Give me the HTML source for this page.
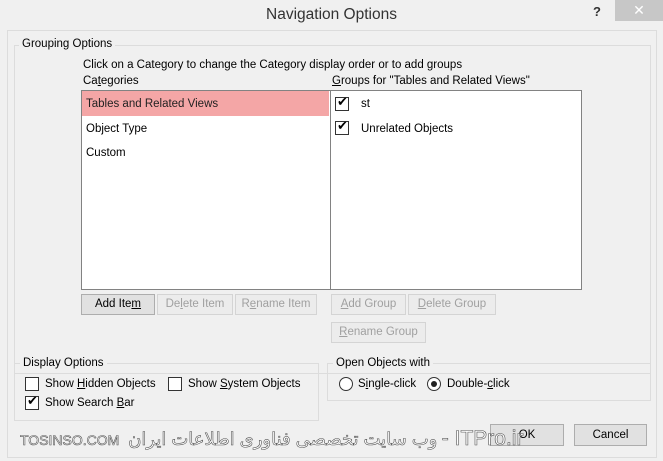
<!DOCTYPE html>
<html><head><style>
body{margin:0;width:663px;height:461px;background:#f0f0f0;font-family:"Liberation Sans","DejaVu Sans",sans-serif;font-size:11.5px;color:#000;position:relative;overflow:hidden}
.a{position:absolute;white-space:nowrap}
.frame{position:absolute;left:7px;top:30px;width:648px;height:426px;border:1px solid #dcdcdc}
.grp{position:absolute;border:1px solid #dcdcdc}
.lbl{position:absolute;background:#f0f0f0;padding:0 3px}
.list{position:absolute;background:#fff;border:1px solid #828282}
.btn{position:absolute;height:19px;border:1px solid #adadad;background:#e1e1e1;text-align:center;line-height:19px;box-sizing:border-box}
.dis{border-color:#d4d4d4;background:#ececec;color:#a0a0a0}
.cb{position:absolute;width:12px;height:12px;border:1px solid #333;background:#fff}
.rb{position:absolute;width:12px;height:12px;border:1px solid #333;border-radius:50%;background:#fff}
u{text-decoration:underline}
</style></head><body>
<div class="a" style="left:0;top:6px;width:663px;text-align:center;font-size:15.5px;color:#333">Navigation Options</div>
<div class="a" style="left:593px;top:4px;font-size:13px;font-weight:bold;color:#333">?</div>
<div class="a" style="left:615px;top:0px;width:48px;height:21px;background:#c7c7c7;color:#fff;text-align:center;line-height:21px;font-size:14px">✕</div>
<div class="frame"></div>
<div class="grp" style="left:14px;top:45px;width:635px;height:327px"></div>
<div class="lbl" style="left:19px;top:38px">Grouping Options</div>
<div class="a" style="left:83px;top:59px">Click on a Category to change the Category display order or to add groups</div>
<div class="a" style="left:83px;top:75px">Ca<u>t</u>egories</div>
<div class="a" style="left:332px;top:75px"><u>G</u>roups for "Tables and Related Views"</div>
<div class="list" style="left:81px;top:90px;width:249px;height:198px"></div>
<div class="list" style="left:330px;top:90px;width:250px;height:198px"></div>
<div class="a" style="left:82px;top:91px;width:247px;height:25px;background:#f4a6a6"></div>
<div class="a" style="left:86px;top:98px;color:#222">Tables and Related Views</div>
<div class="a" style="left:86px;top:123px">Object Type</div>
<div class="a" style="left:86px;top:147px">Custom</div>
<div class="cb" style="left:335px;top:97px"></div><div class="a" style="left:337px;top:94px;font-size:13px">✔</div>
<div class="a" style="left:361px;top:98px">st</div>
<div class="cb" style="left:335px;top:121px"></div><div class="a" style="left:337px;top:118px;font-size:13px">✔</div>
<div class="a" style="left:361px;top:123px">Unrelated Objects</div>
<div class="btn" style="left:81px;top:294px;width:74px;height:21px;line-height:19px">Add Ite<u>m</u></div>
<div class="btn dis" style="left:157px;top:294px;width:76px;height:21px">De<u>l</u>ete Item</div>
<div class="btn dis" style="left:235px;top:294px;width:82px;height:21px">R<u>e</u>name Item</div>
<div class="btn dis" style="left:331px;top:294px;width:75px;height:21px"><u>A</u>dd Group</div>
<div class="btn dis" style="left:408px;top:294px;width:88px;height:21px"><u>D</u>elete Group</div>
<div class="btn dis" style="left:331px;top:322px;width:95px;height:21px"><u>R</u>ename Group</div>
<div class="grp" style="left:14px;top:363px;width:303px;height:56px"></div>
<div class="lbl" style="left:20px;top:357px">Display Options</div>
<div class="grp" style="left:327px;top:363px;width:322px;height:36px"></div>
<div class="lbl" style="left:333px;top:357px">Open Objects with</div>
<div class="cb" style="left:25px;top:377px"></div>
<div class="a" style="left:45px;top:378px">Show <u>H</u>idden Objects</div>
<div class="cb" style="left:168px;top:377px"></div>
<div class="a" style="left:188px;top:378px">Show <u>S</u>ystem Objects</div>
<div class="cb" style="left:25px;top:396px"></div><div class="a" style="left:27px;top:393px;font-size:13px">✔</div>
<div class="a" style="left:45px;top:397px">Show Search <u>B</u>ar</div>
<div class="rb" style="left:339px;top:377px"></div>
<div class="a" style="left:358px;top:378px">S<u>i</u>ngle-click</div>
<div class="rb" style="left:427px;top:377px"></div><div class="a" style="left:431px;top:381px;width:6px;height:6px;border-radius:50%;background:#222"></div>
<div class="a" style="left:447px;top:378px">Double-<u>c</u>lick</div>
<div class="btn" style="left:490px;top:424px;width:74px;height:22px;line-height:20px">OK</div>
<div class="btn" style="left:574px;top:424px;width:73px;height:22px;line-height:20px">Cancel</div>
<div class="a" style="left:20px;top:427px;font-size:16px;color:#fff;-webkit-text-stroke:0.6px #555;direction:ltr"><span style="font-size:14px">TOSINSO.COM</span>&nbsp; <span dir="rtl" style="font-size:18px">وب سایت تخصصی فناوری اطلاعات ایران</span> <span style="font-size:21px">- ITPro.ir</span></div>
</body></html>
